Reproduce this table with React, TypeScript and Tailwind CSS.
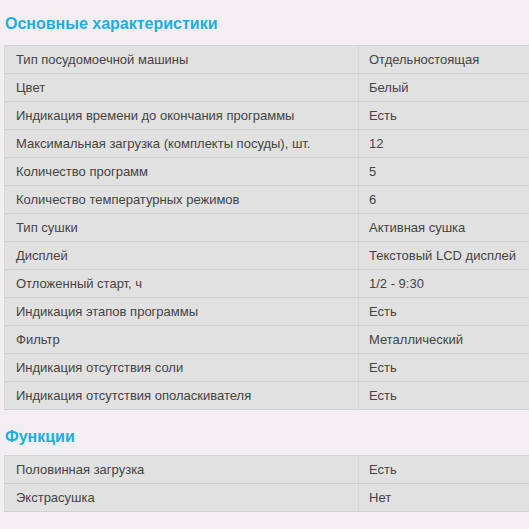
// Dishwasher specification tables

type Spec = [string, string]

const mainSpecs: Spec[] = [
  ['Тип посудомоечной машины', 'Отдельностоящая'],
  ['Цвет', 'Белый'],
  ['Индикация времени до окончания программы', 'Есть'],
  ['Максимальная загрузка (комплекты посуды), шт.', '12'],
  ['Количество программ', '5'],
  ['Количество температурных режимов', '6'],
  ['Тип сушки', 'Активная сушка'],
  ['Дисплей', 'Текстовый LCD дисплей'],
  ['Отложенный старт, ч', '1/2 - 9:30'],
  ['Индикация этапов программы', 'Есть'],
  ['Фильтр', 'Металлический'],
  ['Индикация отсутствия соли', 'Есть'],
  ['Индикация отсутствия ополаскивателя', 'Есть'],
]

const functionSpecs: Spec[] = [
  ['Половинная загрузка', 'Есть'],
  ['Экстрасушка', 'Нет'],
]

function SpecTable({ rows }: { rows: Spec[] }) {
  return (
    <div className="ml-[4px] w-[560px] border-t border-[#d2d2d2] border-l border-l-[#d8d8d8] bg-[#e1e1e1]">
      {rows.map(([name, value]) => (
        <div key={name} className="flex h-[28px] border-b border-[#d0d0d0]">
          <div className="flex w-[354px] shrink-0 items-center border-r border-[#d6d6d6] pl-[11px]">
            {name}
          </div>
          <div className="flex items-center pl-[10px]">{value}</div>
        </div>
      ))}
    </div>
  )
}

export default function App() {
  return (
    <div
      className="h-[529px] w-[529px] overflow-hidden bg-[#f3eef1] text-[13px] text-[#444444]"
      style={{ fontFamily: '"Liberation Sans", Arial, sans-serif' }}
    >
      <h2 className="pl-[5px] pt-[14px] pb-[12px] text-[16px] leading-[19px] font-bold text-[#1aaee3]">
        Основные характеристики
      </h2>
      <SpecTable rows={mainSpecs} />
      <h2 className="pl-[5px] pt-[17px] pb-[9px] text-[16px] leading-[19px] font-bold text-[#1aaee3]">
        Функции
      </h2>
      <SpecTable rows={functionSpecs} />
    </div>
  )
}
